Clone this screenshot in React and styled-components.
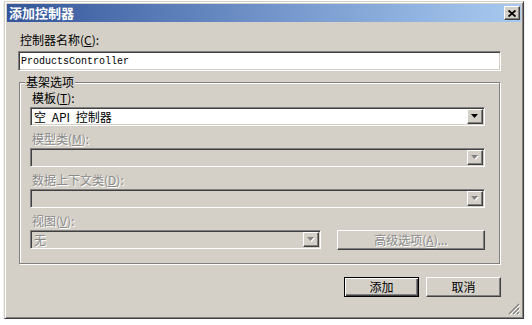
import React from "react";
import styled, { createGlobalStyle, css } from "styled-components";

const face = "#d4d0c8";
const shadow = "#808080";
const dark = "#404040";
const light = "#ffffff";

const GlobalStyle = createGlobalStyle`
  html, body {
    margin: 0;
    background: #fff;
  }
  body {
    font-family: "Noto Sans CJK SC", "Liberation Sans", sans-serif;
    font-size: 12px;
    color: #000;
  }
`;

const raised = css`
  border: 1px solid;
  border-color: ${light} ${dark} ${dark} ${light};
  box-shadow: inset -1px -1px ${shadow}, inset 1px 1px ${face};
`;

const sunken = css`
  border: 1px solid;
  border-color: ${shadow} ${light} ${light} ${shadow};
  box-shadow: inset 1px 1px ${dark}, inset -1px -1px ${face};
`;

const Window = styled.div`
  position: relative;
  box-sizing: border-box;
  width: 520px;
  height: 318px;
  margin: 1px 0 0 4px;
  padding: 2px;
  background: ${face};
  border: 1px solid;
  border-color: ${face} ${dark} ${dark} ${face};
  box-shadow: inset 1px 1px ${light}, inset -1px -1px ${shadow}, 0 1px 1px rgba(0, 0, 0, 0.35);
  display: flex;
  flex-direction: column;
`;

const TitleBar = styled.div`
  height: 18px;
  display: flex;
  align-items: center;
  justify-content: space-between;
  padding: 0 1px 0 2px;
  background: linear-gradient(to right, #34569a, #7193c9 50%, #a8caf0);
`;

const TitleText = styled.span`
  color: #fff;
  font-weight: bold;
  font-size: 13px;
  line-height: 18px;
`;

const CloseButton = styled.button`
  ${raised};
  box-sizing: border-box;
  width: 16px;
  height: 14px;
  padding: 0;
  background: ${face};
  display: flex;
  align-items: center;
  justify-content: center;
`;

const Body = styled.div`
  flex: 1;
  display: flex;
  flex-direction: column;
  padding: 11px 20px 0 11px;
`;

const Label = styled.div`
  line-height: 14px;
  height: 14px;
  padding-left: ${(p) => p.$indent || 0}px;
  margin-bottom: ${(p) => p.$gap ?? 2}px;
  color: ${(p) => (p.$disabled ? "#8a8a8a" : "#000")};
  text-shadow: ${(p) => (p.$disabled ? `1px 1px 0 ${light}` : "none")};
  white-space: nowrap;
`;

const Key = styled.span`
  text-decoration: underline;
  text-underline-offset: 1px;
`;

const TextInput = styled.div`
  ${sunken};
  box-sizing: border-box;
  height: 20px;
  background: #fff;
  display: flex;
  align-items: center;
  padding-left: 2px;
  font-family: "Liberation Mono", monospace;
  font-size: 10px;
`;

const Group = styled.fieldset`
  margin: 4px 1px 0 1px;
  padding: 0 14px 13px 10px;
  border: 1px solid ${shadow};
  box-shadow: inset 1px 1px 0 ${light}, 1px 1px 0 ${light};
  min-width: 0;
`;

const Legend = styled.legend`
  margin-left: -5px;
  padding: 0 1px;
  line-height: 14px;
  background: ${face};
`;

const Rows = styled.div`
  display: flex;
  flex-direction: column;
  gap: 6px;
  margin-top: 2px;
`;

const Row = styled.div`
  display: flex;
  flex-direction: column;
`;

const ViewRow = styled.div`
  display: flex;
  align-items: flex-start;
  gap: 16px;
`;

const Combo = styled.div`
  ${sunken};
  box-sizing: border-box;
  height: 19px;
  flex: none;
  width: ${(p) => (p.$width ? `${p.$width}px` : "auto")};
  background: ${(p) => (p.$disabled ? face : "#fff")};
  display: flex;
  align-items: center;
  padding: 1px;
`;

const ComboText = styled.span`
  flex: 1;
  padding-left: 2px;
  line-height: 14px;
  word-spacing: 3px;
  color: ${(p) => (p.$disabled ? "#8a8a8a" : "#000")};
  text-shadow: ${(p) => (p.$disabled ? `1px 1px 0 ${light}` : "none")};
`;

const DropButton = styled.div`
  ${raised};
  box-sizing: border-box;
  width: 16px;
  height: 15px;
  background: ${face};
  display: flex;
  align-items: center;
  justify-content: center;
`;

const PushButton = styled.button`
  ${raised};
  box-sizing: border-box;
  height: 20px;
  width: ${(p) => (p.$width ? `${p.$width}px` : "auto")};
  flex: ${(p) => (p.$grow ? 1 : "none")};
  padding: 0;
  background: ${face};
  font-family: "Noto Sans CJK SC", "Liberation Sans", sans-serif;
  font-size: 12px;
  line-height: 14px;
  color: ${(p) => (p.$disabled ? "#8a8a8a" : "#000")};
  text-shadow: ${(p) => (p.$disabled ? `1px 1px 0 ${light}` : "none")};
  ${(p) =>
    p.$default &&
    css`
      border: 1px solid #000;
      box-shadow: inset 1px 1px ${light}, inset -1px -1px ${dark}, inset -2px -2px ${shadow};
    `}
`;

const Footer = styled.div`
  display: flex;
  justify-content: flex-end;
  gap: 7px;
  margin-top: 13px;
`;

const Grip = styled.svg`
  position: absolute;
  right: 3px;
  bottom: 3px;
`;

const Arrow = ({ disabled }) => (
  <svg width="8" height="5" viewBox="0 0 8 5">
    {disabled && <path d="M1 1h7L4.5 5z" fill={light} />}
    <path d="M0 0h7L3.5 4z" fill={disabled ? shadow : "#000"} />
  </svg>
);

const ComboBox = ({ text, disabled, width }) => (
  <Combo $disabled={disabled} $width={width}>
    <ComboText $disabled={disabled}>{text}</ComboText>
    <DropButton>
      <Arrow disabled={disabled} />
    </DropButton>
  </Combo>
);

export default function App() {
  return (
    <>
      <GlobalStyle />
      <Window>
        <TitleBar>
          <TitleText>添加控制器</TitleText>
          <CloseButton>
            <svg width="8" height="7" viewBox="0 0 8 7">
              <path d="M0.5 0.5L7.5 6.5M7.5 0.5L0.5 6.5" stroke="#000" strokeWidth="1.8" />
            </svg>
          </CloseButton>
        </TitleBar>
        <Body>
          <Label $indent={2} $gap={4}>
            控制器名称(<Key>C</Key>):
          </Label>
          <TextInput>ProductsController</TextInput>
          <Group>
            <Legend>基架选项</Legend>
            <Rows>
              <Row>
                <Label $indent={2}>
                  模板(<Key>T</Key>):
                </Label>
                <ComboBox text="空 API 控制器" />
              </Row>
              <Row>
                <Label $indent={2} $disabled>
                  模型类(<Key>M</Key>):
                </Label>
                <ComboBox disabled />
              </Row>
              <Row>
                <Label $indent={2} $disabled>
                  数据上下文类(<Key>D</Key>):
                </Label>
                <ComboBox disabled />
              </Row>
              <Row>
                <Label $indent={2} $disabled>
                  视图(<Key>V</Key>):
                </Label>
                <ViewRow>
                  <ComboBox text="无" disabled width={291} />
                  <PushButton $grow $disabled>
                    高级选项(<Key>A</Key>)...
                  </PushButton>
                </ViewRow>
              </Row>
            </Rows>
          </Group>
          <Footer>
            <PushButton $width={75} $default>
              添加
            </PushButton>
            <PushButton $width={75}>取消</PushButton>
          </Footer>
        </Body>
        <Grip width="12" height="12" viewBox="0 0 12 12">
          <path d="M11 1L1 11M11 5L5 11M11 9L9 11" stroke={shadow} strokeWidth="1.2" />
          <path d="M12 2L2 12M12 6L6 12M12 10L10 12" stroke={light} strokeWidth="1" />
        </Grip>
      </Window>
    </>
  );
}
